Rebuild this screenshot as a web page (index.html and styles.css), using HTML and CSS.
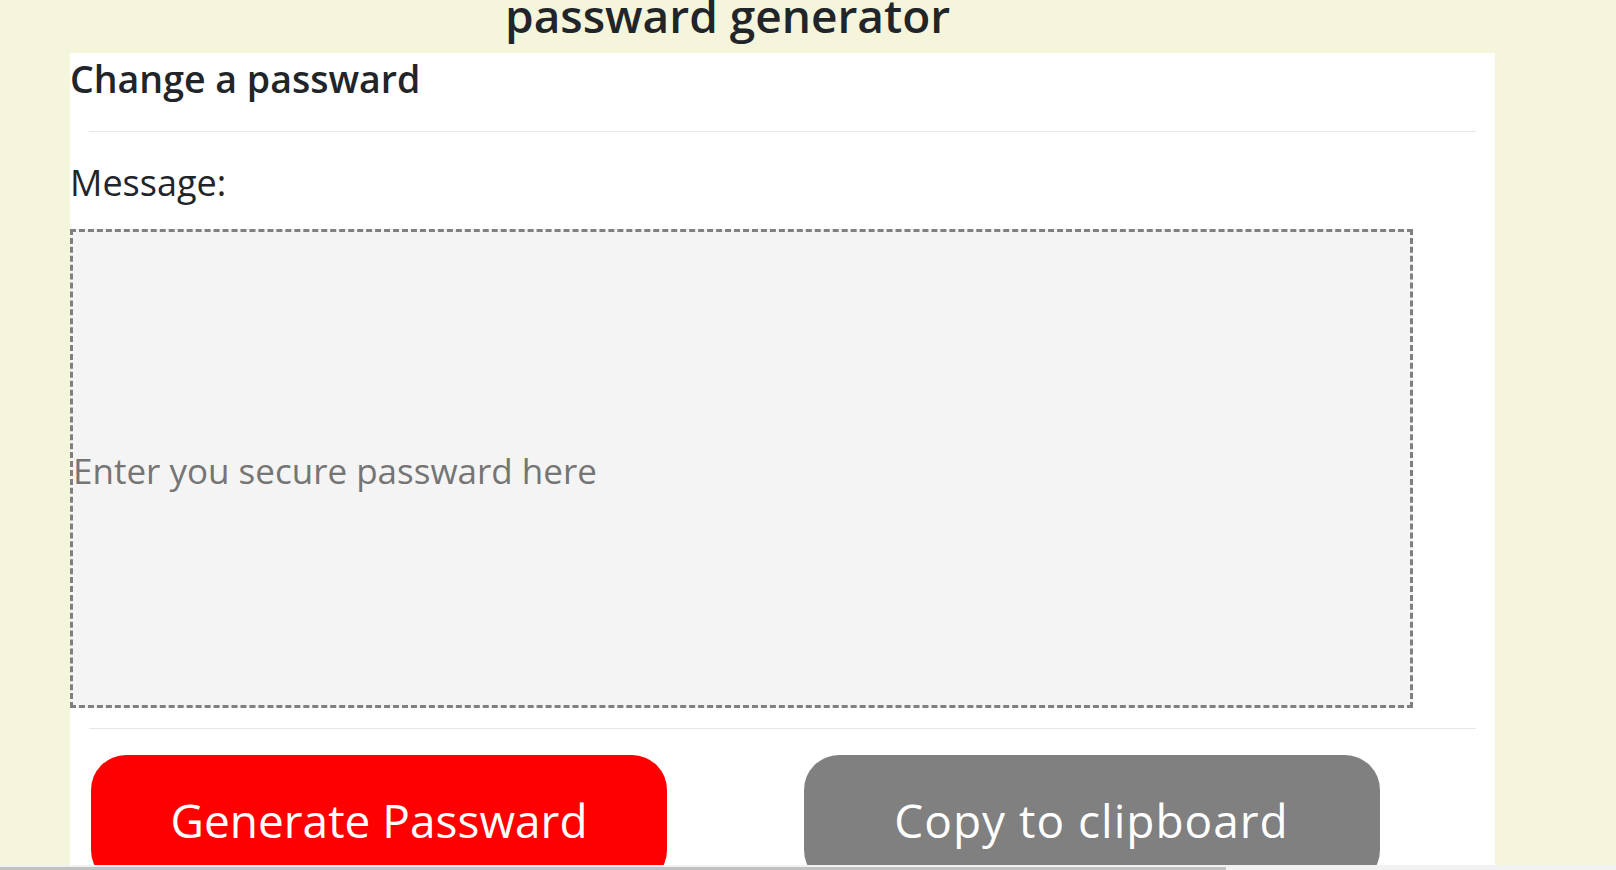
FILE: index.html
```html
<!DOCTYPE html>
<html lang="en">
<head>
<meta charset="utf-8">
<title>passward generator</title>
<link rel="stylesheet" href="styles.css">
</head>
<body>
<div class="page">
  <header class="top">
    <h1 class="title">passward generator</h1>
  </header>
  <main class="card">
    <h2 class="card-title">Change a passward</h2>
    <div class="rule"></div>
    <label class="label" for="pw">Message:</label>
    <input class="pw-box" id="pw" type="text" placeholder="Enter you secure passward here">
    <div class="rule rule-low"></div>
    <div class="actions">
      <div class="col"><button class="btn btn-red" type="button">Generate Passward</button></div>
      <div class="col"><button class="btn btn-gray" type="button">Copy to clipboard</button></div>
    </div>
  </main>
</div>
<div class="hscroll"><div class="hscroll-thumb"></div></div>
</body>
</html>
```
FILE: styles.css
```css
html, body {
  margin: 0;
  height: 100%;
  overflow: hidden;
}
body {
  background: #f5f5dc;
  font-family: "Open Sans", "Noto Sans", sans-serif;
  color: #212529;
  display: flex;
  flex-direction: column;
}
.page {
  flex: 1;
  min-height: 0;
  overflow: hidden;
  display: flex;
  flex-direction: column;
}
.top {
  height: 53px;
  flex: none;
  padding-left: 505px;
}
.title {
  margin: 0;
  font-size: 46px;
  font-weight: 600;
  line-height: 30px;
  white-space: nowrap;
}
.card {
  flex: 1;
  margin-left: 70px;
  width: 1425px;
  background: #ffffff;
  display: flex;
  flex-direction: column;
}
.card-title {
  margin: 0;
  font-size: 37.5px;
  font-weight: 600;
  line-height: 52px;
  white-space: nowrap;
}
.rule {
  height: 1px;
  background: #e6e6e6;
  margin: 26px 19px 0;
  flex: none;
}
.label {
  margin-top: 26px;
  font-size: 36px;
  line-height: 50px;
}
.pw-box {
  margin: 21px 0 0;
  box-sizing: border-box;
  width: 1343px;
  height: 479px;
  flex: none;
  border: 3px dashed #808080;
  background: #f4f4f4;
  padding: 4px 0 0;
  font-family: inherit;
  font-size: 35px;
  color: #212529;
  outline: none;
}
.pw-box::placeholder {
  color: #757575;
}
.rule-low {
  margin-top: 20px;
}
.actions {
  display: flex;
  margin-top: 26px;
}
.col {
  flex: 1 1 0;
}
.btn {
  margin-left: 21px;
  width: 576px;
  height: 130px;
  border: none;
  border-radius: 35px;
  font-family: inherit;
  font-size: 46px;
  color: #ffffff;
  padding: 0;
}
.btn-red {
  background: #ff0000;
}
.btn-gray {
  background: #808080;
  letter-spacing: 1px;
}
.hscroll {
  flex: none;
  height: 5px;
  background: #f1f1f1;
  display: flex;
  align-items: flex-end;
}
.hscroll-thumb {
  width: 1226px;
  height: 3px;
  background: #c1c1c1;
}
```
